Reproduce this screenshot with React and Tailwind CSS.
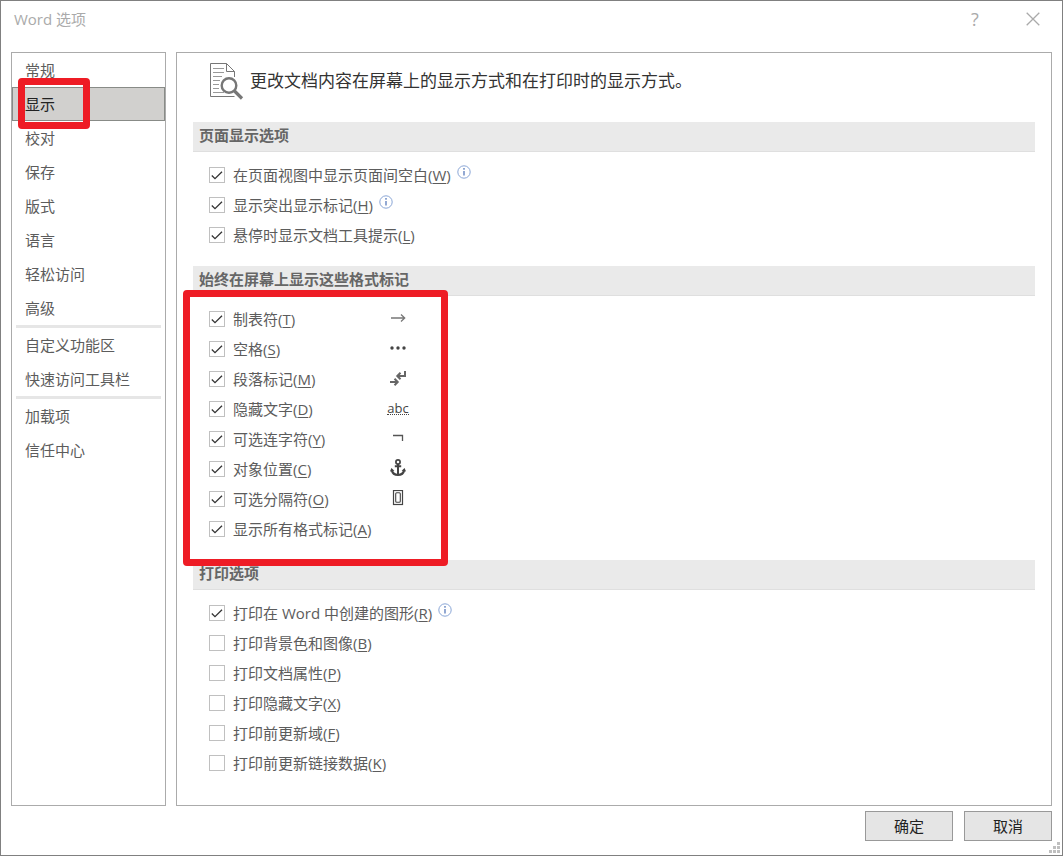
import React from 'react';

const NAV_GROUPS = [
  ['常规', '显示', '校对', '保存', '版式', '语言', '轻松访问', '高级'],
  ['自定义功能区', '快速访问工具栏'],
  ['加载项', '信任中心'],
];

const PAGE_OPTIONS = [
  { label: '在页面视图中显示页面间空白', hotkey: 'W', checked: true, info: true },
  { label: '显示突出显示标记', hotkey: 'H', checked: true, info: true },
  { label: '悬停时显示文档工具提示', hotkey: 'L', checked: true },
];

const MARK_OPTIONS = [
  { label: '制表符', hotkey: 'T', checked: true, symbol: <TabMark /> },
  { label: '空格', hotkey: 'S', checked: true, symbol: <SpaceMark /> },
  { label: '段落标记', hotkey: 'M', checked: true, symbol: <ParagraphMark /> },
  { label: '隐藏文字', hotkey: 'D', checked: true, symbol: <HiddenTextMark /> },
  { label: '可选连字符', hotkey: 'Y', checked: true, symbol: <HyphenMark /> },
  { label: '对象位置', hotkey: 'C', checked: true, symbol: <AnchorMark /> },
  { label: '可选分隔符', hotkey: 'O', checked: true, symbol: <BreakMark /> },
  { label: '显示所有格式标记', hotkey: 'A', checked: true },
];

const PRINT_OPTIONS = [
  { label: '打印在 Word 中创建的图形', hotkey: 'R', checked: true, info: true },
  { label: '打印背景色和图像', hotkey: 'B' },
  { label: '打印文档属性', hotkey: 'P' },
  { label: '打印隐藏文字', hotkey: 'X' },
  { label: '打印前更新域', hotkey: 'F' },
  { label: '打印前更新链接数据', hotkey: 'K' },
];

function TabMark() {
  return (
    <svg width="16" height="16" viewBox="0 0 16 16" fill="none" stroke="#777" strokeWidth="1.3">
      <path d="M1 8h14M11 4.5L14.7 8L11 11.5" />
    </svg>
  );
}

function SpaceMark() {
  return (
    <svg width="16" height="16" viewBox="0 0 16 16" fill="#444">
      <circle cx="2" cy="8" r="1.7" />
      <circle cx="8" cy="8" r="1.7" />
      <circle cx="14" cy="8" r="1.7" />
    </svg>
  );
}

function ParagraphMark() {
  return (
    <svg width="18" height="16" viewBox="0 0 18 16" fill="none" stroke="#666" strokeWidth="2">
      <path d="M16 1v5H8.5M11.5 2.8L8.3 6L11.5 9.2" />
      <path d="M1 12h7.5M5.5 8.8L8.7 12L5.5 15.2" />
    </svg>
  );
}

function HiddenTextMark() {
  return <span className="border-b border-dotted border-[#444] text-[13px] leading-3 text-[#444]">abc</span>;
}

function HyphenMark() {
  return (
    <svg width="16" height="16" viewBox="0 0 16 16" fill="none" stroke="#555" strokeWidth="1.3">
      <path d="M3 5.5h9.5V11" />
    </svg>
  );
}

function AnchorMark() {
  return (
    <svg width="16" height="18" viewBox="0 0 16 18" fill="none" stroke="#444">
      <circle cx="8" cy="3" r="2.1" strokeWidth="1.7" />
      <path d="M8 5v11M4.8 7.2h6.4" strokeWidth="2" />
      <path d="M1.8 11c.6 3 3 5 6.2 5s5.6-2 6.2-5" strokeWidth="2.2" />
      <path d="M0 12.6L1.4 9l3 2.8zM16 12.6L14.6 9l-3 2.8z" fill="#444" stroke="none" />
    </svg>
  );
}

function BreakMark() {
  return (
    <svg width="16" height="16" viewBox="0 0 16 16" fill="none" stroke="#444">
      <rect x="3.5" y="0.5" width="9" height="14" strokeWidth="1.2" />
      <rect x="5.7" y="2.7" width="4.6" height="9.6" rx="1" strokeWidth="1.1" />
    </svg>
  );
}

function InfoIcon() {
  return (
    <svg className="mb-1.5 ml-1.5 shrink-0" width="14" height="14" viewBox="0 0 14 14" fill="none">
      <circle cx="7" cy="7" r="6.2" stroke="#8aa6d6" />
      <path d="M7 6v4.5" stroke="#4a6fb5" strokeWidth="1.2" />
      <circle cx="7" cy="3.9" r="0.8" fill="#4a6fb5" />
    </svg>
  );
}

function PageSearchIcon() {
  return (
    <svg className="shrink-0" width="36" height="38" viewBox="0 0 36 38" fill="none" stroke="#777">
      <path d="M25.5 15V9.5L17.5 1.5H1.5V34.5H25.5" />
      <path d="M17.5 1.5V9.5H25.5" />
      <path d="M4 6.5h11M4 10.5h11M4 14.5h9M4 18.5h7M4 22.5h6M4 26.5h6M4 30.5h11" stroke="#999" />
      <circle cx="20" cy="23.5" r="7.3" fill="#fff" strokeWidth="2.4" />
      <path d="M25.5 29L33 36.5" strokeWidth="3.2" />
    </svg>
  );
}

function Option({ label, hotkey, checked = false, info, symbol }) {
  return (
    <li className="flex h-[30px] items-center">
      <label className="flex items-center gap-2 whitespace-nowrap">
        <span className="grid size-4 shrink-0">
          <input
            type="checkbox"
            defaultChecked={checked}
            className="peer col-start-1 row-start-1 size-4 appearance-none border border-[#c0c0c0] bg-white"
          />
          <svg
            className="pointer-events-none invisible col-start-1 row-start-1 size-4 peer-checked:visible"
            viewBox="0 0 16 16"
            fill="none"
            stroke="#333"
            strokeWidth="1.3"
          >
            <path d="M2.8 8.5L6 11.7L13 4.7" />
          </svg>
        </span>
        {/* Rows with a symbol share one label width so the symbols line up */}
        <span className={symbol ? 'w-[152px]' : ''}>
          {label}(<span className="underline underline-offset-2">{hotkey}</span>)
        </span>
      </label>
      {info && <InfoIcon />}
      {symbol && <span className="flex h-7 w-[26px] items-center justify-center pb-0.5">{symbol}</span>}
    </li>
  );
}

function Section({ title, options, highlighted }) {
  return (
    <section>
      <h2 className="flex h-[30px] items-center border-b border-[#dfdfdf] bg-[#eaeaea] px-1.5 pb-1 font-bold text-[#666]">
        {title}
      </h2>
      <div className="relative pt-2 pb-4 pl-4">
        <ul>
          {options.map((option) => (
            <Option key={option.hotkey} {...option} />
          ))}
        </ul>
        {highlighted && (
          <div className="pointer-events-none absolute -inset-y-1.5 -left-2.5 z-10 w-[265px] rounded-sm border-[7px] border-[#ee1c25]"></div>
        )}
      </div>
    </section>
  );
}

function NavItem({ label, active }) {
  if (!active) {
    return (
      <li>
        <button className="h-[34px] w-full px-[13px] text-left">{label}</button>
      </li>
    );
  }

  return (
    <li className="relative">
      <button className="h-[34px] w-full border border-[#888b87] bg-[#d1d0ce] px-3 text-left text-[#222]">{label}</button>
      <div className="pointer-events-none absolute -top-[9px] left-1.5 z-10 h-[51px] w-[72px] rounded-sm border-[7px] border-[#ee1c25]"></div>
    </li>
  );
}

function App() {
  return (
    <div className="relative flex min-h-screen flex-col border border-[#808080] bg-white font-['Open_Sans','Noto_Sans_CJK_SC',sans-serif] text-[15px] leading-5 text-[#5c5c5c]">
      <header className="flex h-[51px] items-center justify-between pb-4 pl-[13px] text-[#aaa]">
        <h1>Word 选项</h1>
        <div className="flex">
          <button className="w-[58px] text-lg leading-5" aria-label="帮助">?</button>
          <button className="flex w-[58px] items-center justify-center" aria-label="关闭">
            <svg width="14" height="14" viewBox="0 0 14 14" fill="none" stroke="#aaa" strokeWidth="1.3">
              <path d="M0.7 0.7L13.3 13.3M13.3 0.7L0.7 13.3" />
            </svg>
          </button>
        </div>
      </header>

      <div className="flex flex-1 gap-2.5 px-2.5">
        <nav className="w-[155px] shrink-0 border border-[#ababab]">
          {NAV_GROUPS.map((group, index) => (
            <React.Fragment key={group[0]}>
              {index > 0 && <hr className="mx-1 h-[3px] border-0 bg-[#e6e6e6]" />}
              <ul>
                {group.map((label) => (
                  <NavItem key={label} label={label} active={label === '显示'} />
                ))}
              </ul>
            </React.Fragment>
          ))}
        </nav>

        <main className="flex-1 border border-[#ababab] px-4">
          <div className="flex h-[69px] items-center gap-[5px] pb-[13px] pl-4 text-[17px] text-[#333]">
            <PageSearchIcon />
            <p>更改文档内容在屏幕上的显示方式和在打印时的显示方式。</p>
          </div>
          <Section title="页面显示选项" options={PAGE_OPTIONS} />
          <Section title="始终在屏幕上显示这些格式标记" options={MARK_OPTIONS} highlighted />
          <Section title="打印选项" options={PRINT_OPTIONS} />
        </main>
      </div>

      <footer className="flex justify-end gap-[11px] px-2.5 pt-[5px] pb-3.5 text-[#222]">
        <button className="h-[30px] w-[88px] border border-[#999] bg-[#e5e5e5]">确定</button>
        <button className="h-[30px] w-[88px] border border-[#999] bg-[#e5e5e5]">取消</button>
      </footer>

      {/* Resize grip */}
      <svg className="absolute right-0.5 bottom-0.5" width="11" height="11" viewBox="0 0 11 11" fill="#bfbfbf">
        <path d="M8 0h3v3h-3zM4 4h3v3h-3zM8 4h3v3h-3zM0 8h3v3h-3zM4 8h3v3h-3zM8 8h3v3h-3z" />
      </svg>
    </div>
  );
}

export default App;
